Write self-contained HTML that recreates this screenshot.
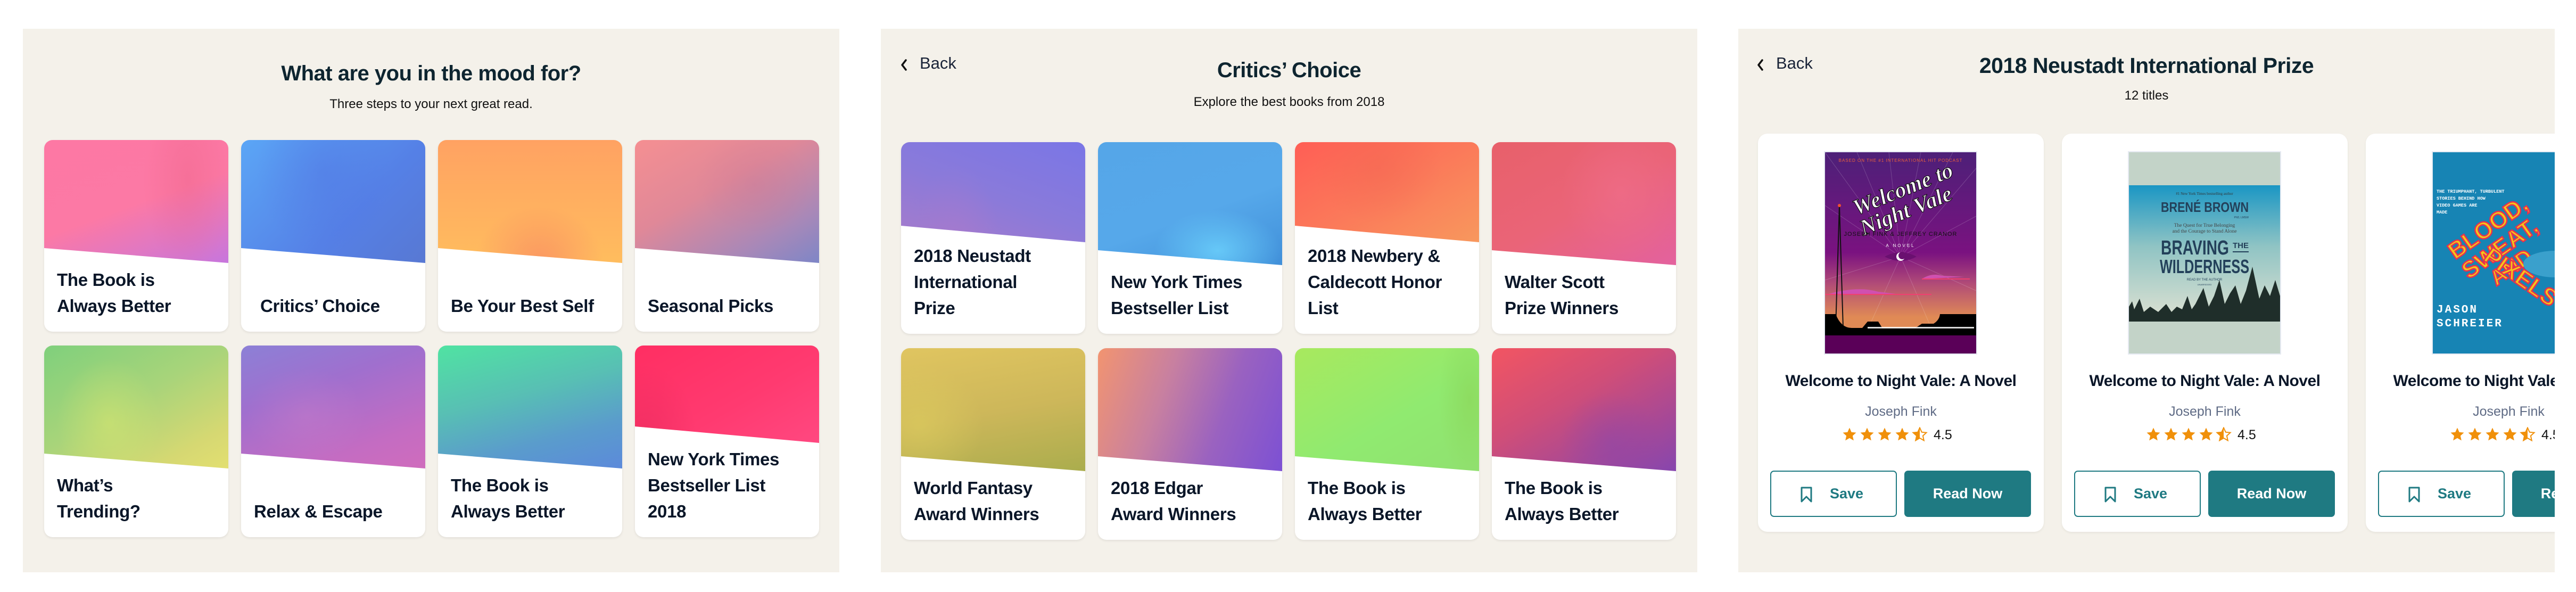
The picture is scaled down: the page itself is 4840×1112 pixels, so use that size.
<!DOCTYPE html>
<html><head><meta charset="utf-8">
<style>
*{box-sizing:border-box;margin:0;padding:0}
body{width:4840px;height:1112px;background:#fff;font-family:"Liberation Sans",sans-serif;color:#0c1a28;position:relative;overflow:hidden}
.panel{position:absolute;top:54px;height:1021px;width:1534px;background:#f4f1ea;overflow:hidden}
.h1{position:absolute;left:0;right:0;text-align:center;font-weight:bold;font-size:40px;color:#0e2530;letter-spacing:-0.5px}
.sub{position:absolute;left:0;right:0;text-align:center;font-size:24px;color:#111}
.card{position:absolute;width:346px;height:360px;background:#fff;border-radius:16px;overflow:hidden;box-shadow:0 2px 5px rgba(0,0,0,0.08)}
.img{position:absolute;left:0;top:0;width:100%;height:240px}
.txt{position:absolute;left:24px;bottom:24px;font-weight:bold;font-size:33px;line-height:49px;color:#0a1628;letter-spacing:-0.3px}
.back{position:absolute;font-size:31px;color:#1a2438}
.back svg{position:absolute;left:0;top:0}
.back span{position:absolute;left:35px;top:-10px;white-space:nowrap}
.bcard{position:absolute;top:197px;width:537px;height:748px;background:#fff;border-radius:18px;box-shadow:0 2px 5px rgba(0,0,0,0.06)}
.cover{position:absolute;left:124px;top:33px;width:288px;height:382px;border:2px solid #e6eaf2}
.btitle{position:absolute;left:0;right:0;top:448px;text-align:center;font-weight:bold;font-size:30px;color:#0a1628;white-space:nowrap;letter-spacing:-0.5px}
.auth{position:absolute;left:0;right:0;top:508px;text-align:center;font-size:25px;color:#5f6b85}
.stars{position:absolute;left:158px;top:551px;height:30px}
.stars span{position:absolute;left:172px;top:0;font-size:25px;color:#111;line-height:30px}
.save{position:absolute;left:23px;top:633px;width:238px;height:87px;border:2px solid #1f7a82;border-radius:7px}
.save svg{position:absolute;left:55px;top:28px}
.save span{position:absolute;left:110px;top:26px;font-weight:bold;font-size:27px;color:#1f7a82}
.read{position:absolute;left:275px;top:633px;width:238px;height:87px;background:#1f7a82;border-radius:7px;color:#fff;font-weight:bold;font-size:27px;text-align:center;line-height:87px}
</style></head><body>

<!-- PANEL 1 -->
<div class="panel" style="left:43px">
  <div class="h1" style="top:62px">What are you in the mood for?</div>
  <div class="sub" style="top:128px">Three steps to your next great read.</div>

  <div class="card" style="left:40px;top:209px"><div class="img" style="clip-path:polygon(0 0,100% 0,100% 231px,0 203px);background:radial-gradient(ellipse 120px 260px at 78% 30%,rgba(235,95,130,0.35),transparent 70%),linear-gradient(160deg,#fd78a4 0%,#fc79a5 50%,#c476e0 100%)"></div><div class="txt">The Book is<br>Always Better</div></div>
  <div class="card" style="left:410px;top:209px"><div class="img" style="clip-path:polygon(0 0,100% 0,100% 231px,0 203px);background:radial-gradient(ellipse 170px 200px at 45% 25%,rgba(80,110,225,0.35),transparent 75%),linear-gradient(135deg,#5ba6f6 0%,#5580e6 60%,#5878d2 100%)"></div><div class="txt" style="left:36px">Critics’ Choice</div></div>
  <div class="card" style="left:780px;top:209px"><div class="img" style="clip-path:polygon(0 0,100% 0,100% 231px,0 203px);background:radial-gradient(ellipse 160px 140px at 55% 95%,rgba(248,128,100,0.6),transparent 75%),linear-gradient(180deg,#ffa262 0%,#ffb55f 70%,#ffbe5e 100%)"></div><div class="txt">Be Your Best Self</div></div>
  <div class="card" style="left:1150px;top:209px"><div class="img" style="clip-path:polygon(0 0,100% 0,100% 231px,0 203px);background:radial-gradient(ellipse 150px 130px at 65% 35%,rgba(200,120,150,0.35),transparent 75%),linear-gradient(150deg,#f58f92 0%,#e08898 40%,#a888b8 75%,#7a86c8 100%)"></div><div class="txt">Seasonal Picks</div></div>

  <div class="card" style="left:40px;top:595px"><div class="img" style="clip-path:polygon(0 0,100% 0,100% 231px,0 203px);background:radial-gradient(ellipse 130px 160px at 35% 60%,rgba(215,230,110,0.55),transparent 75%),linear-gradient(150deg,#7fd07c 0%,#a8d47a 45%,#d6d872 80%,#e4e070 100%)"></div><div class="txt">What’s<br>Trending?</div></div>
  <div class="card" style="left:410px;top:595px"><div class="img" style="clip-path:polygon(0 0,100% 0,100% 231px,0 203px);background:radial-gradient(ellipse 150px 120px at 35% 55%,rgba(210,130,200,0.3),transparent 75%),linear-gradient(160deg,#8c80d6 0%,#a06fce 35%,#c46cc2 75%,#d16cbc 100%)"></div><div class="txt">Relax &amp; Escape</div></div>
  <div class="card" style="left:780px;top:595px"><div class="img" style="clip-path:polygon(0 0,100% 0,100% 231px,0 203px);background:linear-gradient(165deg,#50e3a2 0%,#58bfb4 40%,#5a9ccc 70%,#5c88dc 100%)"></div><div class="txt">The Book is<br>Always Better</div></div>
  <div class="card" style="left:1150px;top:595px"><div class="img" style="clip-path:polygon(0 0,100% 0,100% 183px,0 152px);background:radial-gradient(ellipse 140px 190px at 5% 70%,rgba(230,40,90,0.5),transparent 70%),linear-gradient(150deg,#ff2e62 0%,#ff3a70 50%,#ff4d86 100%)"></div><div class="txt">New York Times<br>Bestseller List<br>2018</div></div>
</div>

<!-- PANEL 2 -->
<div class="panel" style="left:1655px">
  <div class="back" style="left:38px;top:57px"><svg width="12" height="22" viewBox="0 0 12 22"><path d="M9 2 L2 11 L9 20" fill="none" stroke="#111" stroke-width="3.5" stroke-linecap="round" stroke-linejoin="round"/></svg><span>Back</span></div>
  <div class="h1" style="top:56px">Critics’ Choice</div>
  <div class="sub" style="top:124px">Explore the best books from 2018</div>

  <div class="card" style="left:38px;top:213px"><div class="img" style="clip-path:polygon(0 0,100% 0,100% 188px,0 157px);background:radial-gradient(ellipse 110px 200px at 30% 80%,rgba(180,120,200,0.35),transparent 75%),linear-gradient(200deg,#7a76e6 0%,#8a7ada 45%,#b07cc6 100%)"></div><div class="txt">2018 Neustadt<br>International<br>Prize</div></div>
  <div class="card" style="left:408px;top:213px"><div class="img" style="clip-path:polygon(0 0,100% 0,100% 231px,0 203px);background:radial-gradient(ellipse 170px 110px at 65% 85%,rgba(105,205,250,0.9),transparent 70%),linear-gradient(160deg,#55a6e8 0%,#56a8ea 55%,#3f8ed8 100%)"></div><div class="txt">New York Times<br>Bestseller List</div></div>
  <div class="card" style="left:778px;top:213px"><div class="img" style="clip-path:polygon(0 0,100% 0,100% 188px,0 157px);background:radial-gradient(ellipse 160px 140px at 45% 20%,rgba(240,100,80,0.4),transparent 75%),linear-gradient(150deg,#ff5e55 0%,#fb7a5a 45%,#f7a05e 100%)"></div><div class="txt">2018 Newbery &amp;<br>Caldecott Honor<br>List</div></div>
  <div class="card" style="left:1148px;top:213px"><div class="img" style="clip-path:polygon(0 0,100% 0,100% 231px,0 203px);background:radial-gradient(ellipse 150px 170px at 70% 40%,rgba(240,110,140,0.6),transparent 75%),linear-gradient(150deg,#e8606a 0%,#ea6478 50%,#e362a0 100%)"></div><div class="txt">Walter Scott<br>Prize Winners</div></div>

  <div class="card" style="left:38px;top:600px"><div class="img" style="clip-path:polygon(0 0,100% 0,100% 231px,0 203px);background:radial-gradient(ellipse 160px 150px at 10% 60%,rgba(225,210,95,0.5),transparent 75%),linear-gradient(170deg,#e0c560 0%,#cdb75a 50%,#a8ac4c 100%)"></div><div class="txt">World Fantasy<br>Award Winners</div></div>
  <div class="card" style="left:408px;top:600px"><div class="img" style="clip-path:polygon(0 0,100% 0,100% 231px,0 203px);background:linear-gradient(110deg,#f29470 0%,#c880a0 35%,#9a62c0 65%,#7c50d4 100%)"></div><div class="txt">2018 Edgar<br>Award Winners</div></div>
  <div class="card" style="left:778px;top:600px"><div class="img" style="clip-path:polygon(0 0,100% 0,100% 231px,0 203px);background:radial-gradient(ellipse 80px 200px at 95% 40%,rgba(140,215,90,0.7),transparent 75%),linear-gradient(150deg,#a8e95e 0%,#90ea70 55%,#90e070 100%)"></div><div class="txt">The Book is<br>Always Better</div></div>
  <div class="card" style="left:1148px;top:600px"><div class="img" style="clip-path:polygon(0 0,100% 0,100% 231px,0 203px);background:radial-gradient(ellipse 130px 130px at 65% 75%,rgba(140,70,170,0.5),transparent 75%),linear-gradient(150deg,#f25562 0%,#d04e78 40%,#a44898 75%,#8446b0 100%)"></div><div class="txt">The Book is<br>Always Better</div></div>
</div>

<!-- PANEL 3 -->
<div class="panel" style="left:3266px">
  <div class="back" style="left:36px;top:57px"><svg width="12" height="22" viewBox="0 0 12 22"><path d="M9 2 L2 11 L9 20" fill="none" stroke="#111" stroke-width="3.5" stroke-linecap="round" stroke-linejoin="round"/></svg><span>Back</span></div>
  <div class="h1" style="top:46px;font-size:41px">2018 Neustadt International Prize</div>
  <div class="sub" style="top:112px">12 titles</div>

  <!-- card 1 -->
  <div class="bcard" style="left:37px">
    <div class="cover">
      <svg width="284" height="378" viewBox="0 0 284 378">
        <defs>
          <linearGradient id="nv" x1="0" y1="0" x2="0" y2="1">
            <stop offset="0" stop-color="#4d2078"/><stop offset="0.5" stop-color="#7a1280"/><stop offset="0.65" stop-color="#b04a78"/><stop offset="0.82" stop-color="#e08a55"/>
          </linearGradient>
          <path id="st" d="M14 1.5l3.7 8.2 8.8.9-6.6 6 1.9 8.8L14 20.9 6.2 25.4l1.9-8.8-6.6-6 8.8-.9z"/>
        </defs>
        <rect width="284" height="378" fill="url(#nv)"/>
        <g stroke="#ffffff" stroke-opacity="0.18" stroke-width="1">
          <line x1="142" y1="196" x2="0" y2="0"/><line x1="142" y1="196" x2="60" y2="0"/><line x1="142" y1="196" x2="120" y2="0"/><line x1="142" y1="196" x2="180" y2="0"/><line x1="142" y1="196" x2="240" y2="0"/><line x1="142" y1="196" x2="284" y2="30"/><line x1="142" y1="196" x2="284" y2="120"/><line x1="142" y1="196" x2="284" y2="260"/><line x1="142" y1="196" x2="0" y2="100"/><line x1="142" y1="196" x2="0" y2="240"/><line x1="142" y1="196" x2="60" y2="378"/><line x1="142" y1="196" x2="220" y2="378"/>
        </g>
        <text x="142" y="18" text-anchor="middle" font-family="Liberation Sans" font-size="8" fill="#f0603a" letter-spacing="1">BASED ON THE #1 INTERNATIONAL HIT PODCAST</text>
        <g transform="rotate(-22 142 80)" font-family="Liberation Serif" font-style="italic" font-weight="bold" fill="#fff" stroke="#111" stroke-width="1.2">
          <text x="150" y="85" text-anchor="middle" font-size="42">Welcome to</text>
          <text x="140" y="125" text-anchor="middle" font-size="42">Night Vale</text>
        </g>
        <text x="142" y="157" text-anchor="middle" font-family="Liberation Sans" font-size="11" fill="#111" letter-spacing="1">JOSEPH FINK &amp; JEFFREY CRANOR</text>
        <text x="142" y="178" text-anchor="middle" font-family="Liberation Sans" font-size="8" fill="#fff" letter-spacing="3">A NOVEL</text>
        <path d="M112 196 Q142 180 172 196 Q142 212 112 196Z" fill="#6a1070"/>
        <circle cx="142" cy="196" r="8" fill="#fff"/><circle cx="145" cy="194" r="7" fill="#6a1070"/>
        <path d="M182 238 Q200 226 220 232 L262 234 L182 238Z" fill="#d050b0"/><rect x="182" y="237" width="90" height="2" fill="#f04070"/>
        <path d="M0 268 Q60 250 100 262 L150 268 Z" fill="#d050b0"/><rect x="0" y="266" width="200" height="2" fill="#f04070"/>
        <path d="M20 330 L27 100 L34 330 Z" fill="none" stroke="#111" stroke-width="2"/><circle cx="27" cy="100" r="3" fill="#f05030"/>
        <path d="M0 304 L20 304 Q30 330 50 330 L70 330 L80 318 L100 318 L110 334 Q140 340 170 330 L182 322 L204 322 Q215 315 216 304 L284 304 L284 330 L0 350 Z" fill="#000"/>
        <rect x="0" y="330" width="284" height="14" fill="#000"/>
        <rect x="80" y="328" width="200" height="3" fill="#fff" opacity="0.85"/>
        <rect x="0" y="344" width="284" height="34" fill="#5a0058"/>
      </svg>
    </div>
    <div class="btitle">Welcome to Night Vale: A Novel</div>
    <div class="auth">Joseph Fink</div>
    <div class="stars"><svg width="170" height="30" viewBox="0 0 170 30"><g fill="#f0900a"><use href="#st" x="0"/><use href="#st" x="33"/><use href="#st" x="66"/><use href="#st" x="99"/></g><g transform="translate(132 0)"><path d="M14 1.5l3.7 8.2 8.8.9-6.6 6 1.9 8.8L14 20.9 6.2 25.4l1.9-8.8-6.6-6 8.8-.9z" fill="none" stroke="#f0900a" stroke-width="2"/><path d="M14 1.5 L14 20.9 L6.2 25.4l1.9-8.8-6.6-6 8.8-.9z" fill="#f0900a"/></g></svg><span>4.5</span></div>
    <div class="save"><svg width="22" height="30" viewBox="0 0 22 30"><path d="M2 2 H20 V28 L11 19 L2 28 Z" fill="none" stroke="#1f7a82" stroke-width="3" stroke-linejoin="round"/></svg><span>Save</span></div>
    <div class="read">Read Now</div>
  </div>

  <!-- card 2 -->
  <div class="bcard" style="left:608px">
    <div class="cover">
      <svg width="284" height="378" viewBox="0 0 284 378">
        <defs><linearGradient id="bw" x1="0" y1="0" x2="0" y2="1"><stop offset="0" stop-color="#1a96c4"/><stop offset="0.45" stop-color="#90c4c4"/><stop offset="1" stop-color="#dfe2d2"/></linearGradient></defs>
        <rect width="284" height="378" fill="#c3d3c8"/>
        <rect y="62" width="284" height="256" fill="url(#bw)"/>
        <text x="142" y="80" text-anchor="middle" font-family="Liberation Serif" font-size="7" fill="#333">#1 New York Times bestselling author</text>
        <text x="60" y="112" font-family="Liberation Sans" font-weight="bold" font-size="26" fill="#23405a" textLength="165" lengthAdjust="spacingAndGlyphs">BRENÉ  BROWN</text>
        <text x="225" y="124" text-anchor="end" font-family="Liberation Sans" font-size="5" fill="#23405a">PhD, LMSW</text>
        <text x="142" y="140" text-anchor="middle" font-family="Liberation Serif" font-size="9.5" fill="#444">The Quest for True Belonging</text>
        <text x="142" y="151" text-anchor="middle" font-family="Liberation Serif" font-size="9.5" fill="#444">and the Courage to Stand Alone</text>
        <text x="60" y="192" font-family="Liberation Sans" font-weight="bold" font-size="38" fill="#23405a" textLength="128" lengthAdjust="spacingAndGlyphs">BRAVING</text>
        <text x="195" y="180" font-family="Liberation Sans" font-weight="bold" font-size="15" fill="#23405a" textLength="30" lengthAdjust="spacingAndGlyphs">THE</text>
        <rect x="195" y="186" width="30" height="2" fill="#23405a"/>
        <text x="58" y="227" font-family="Liberation Sans" font-weight="bold" font-size="36" fill="#23405a" textLength="168" lengthAdjust="spacingAndGlyphs">WILDERNESS</text>
        <text x="142" y="241" text-anchor="middle" font-family="Liberation Sans" font-size="6" fill="#23405a">READ BY THE AUTHOR</text>
        <text x="142" y="250" text-anchor="middle" font-family="Liberation Sans" font-size="4" fill="#23405a">UNABRIDGED</text>
        <path d="M0 318 L0 290 L6 280 L10 295 L20 275 L28 300 L40 290 L55 300 L70 285 L80 300 L90 290 L100 295 L110 270 L118 295 L125 285 L140 255 L150 290 L160 270 L170 240 L180 285 L190 265 L200 250 L210 285 L220 260 L232 215 L245 275 L255 250 L265 270 L275 240 L284 270 L284 318 Z" fill="#1f2e2a"/>
      </svg>
    </div>
    <div class="btitle">Welcome to Night Vale: A Novel</div>
    <div class="auth">Joseph Fink</div>
    <div class="stars"><svg width="170" height="30" viewBox="0 0 170 30"><g fill="#f0900a"><use href="#st" x="0"/><use href="#st" x="33"/><use href="#st" x="66"/><use href="#st" x="99"/></g><g transform="translate(132 0)"><path d="M14 1.5l3.7 8.2 8.8.9-6.6 6 1.9 8.8L14 20.9 6.2 25.4l1.9-8.8-6.6-6 8.8-.9z" fill="none" stroke="#f0900a" stroke-width="2"/><path d="M14 1.5 L14 20.9 L6.2 25.4l1.9-8.8-6.6-6 8.8-.9z" fill="#f0900a"/></g></svg><span>4.5</span></div>
    <div class="save"><svg width="22" height="30" viewBox="0 0 22 30"><path d="M2 2 H20 V28 L11 19 L2 28 Z" fill="none" stroke="#1f7a82" stroke-width="3" stroke-linejoin="round"/></svg><span>Save</span></div>
    <div class="read">Read Now</div>
  </div>

  <!-- card 3 -->
  <div class="bcard" style="left:1179px">
    <div class="cover">
      <svg width="284" height="378" viewBox="0 0 284 378">
        <rect width="284" height="378" fill="#1784b4"/>
        <g font-family="Liberation Mono" font-weight="bold" font-size="8.5" fill="#fff">
          <text x="7" y="76">THE TRIUMPHANT, TURBULENT</text>
          <text x="7" y="89">STORIES BEHIND HOW</text>
          <text x="7" y="102">VIDEO GAMES ARE</text>
          <text x="7" y="115">MADE</text>
        </g>
        <g font-family="Liberation Sans" font-weight="bold" fill="#f5c518" stroke="#e8304e" stroke-width="2.5" transform="rotate(-35 150 200)">
          <text x="60" y="140" font-size="44">BLOOD,</text>
          <text x="60" y="185" font-size="44">SWEAT,</text>
          <text x="95" y="225" font-size="40">AND</text>
        </g>
        <g font-family="Liberation Sans" font-weight="bold" fill="#f5c518" stroke="#e8304e" stroke-width="2.5" transform="rotate(35 150 260)">
          <text x="70" y="245" font-size="44">PIXELS</text>
        </g>
        <ellipse cx="230" cy="210" rx="60" ry="25" fill="#3aa0cc"/>
        <g font-family="Liberation Mono" font-weight="bold" fill="#fff">
          <text x="7" y="301" font-size="21" letter-spacing="3">JASON</text>
          <text x="7" y="327" font-size="21" letter-spacing="3">SCHREIER</text>
        </g>
      </svg>
    </div>
    <div class="btitle">Welcome to Night Vale: A Novel</div>
    <div class="auth">Joseph Fink</div>
    <div class="stars"><svg width="170" height="30" viewBox="0 0 170 30"><g fill="#f0900a"><use href="#st" x="0"/><use href="#st" x="33"/><use href="#st" x="66"/><use href="#st" x="99"/></g><g transform="translate(132 0)"><path d="M14 1.5l3.7 8.2 8.8.9-6.6 6 1.9 8.8L14 20.9 6.2 25.4l1.9-8.8-6.6-6 8.8-.9z" fill="none" stroke="#f0900a" stroke-width="2"/><path d="M14 1.5 L14 20.9 L6.2 25.4l1.9-8.8-6.6-6 8.8-.9z" fill="#f0900a"/></g></svg><span>4.5</span></div>
    <div class="save"><svg width="22" height="30" viewBox="0 0 22 30"><path d="M2 2 H20 V28 L11 19 L2 28 Z" fill="none" stroke="#1f7a82" stroke-width="3" stroke-linejoin="round"/></svg><span>Save</span></div>
    <div class="read">Read Now</div>
  </div>
</div>

</body></html>
